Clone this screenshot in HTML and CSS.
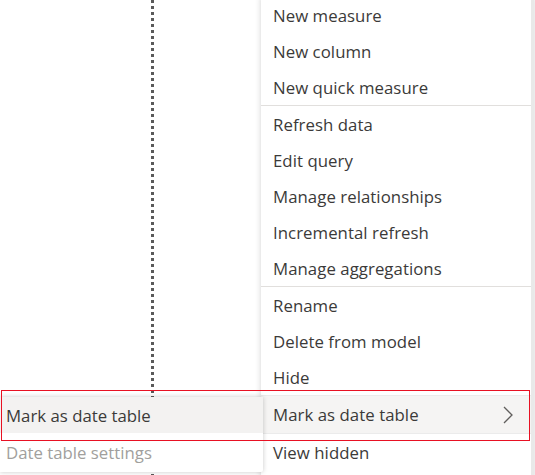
FILE: index.html
```html
<!DOCTYPE html>
<html>
<head>
<meta charset="utf-8">
<link rel="stylesheet" href="styles.css">
</head>
<body>
<div class="stage">
  <div class="pane-left"></div>
  <div class="divider"></div>
  <div class="pane-right">
    <div class="bg-lines">
      <div class="bg-line">Data</div>
      <div class="bg-line">Year</div>
      <div class="bg-line">Year</div>
    </div>
  </div>

  <div class="menu">
    <div class="item">New measure</div>
    <div class="item">New column</div>
    <div class="item">New quick measure</div>
    <div class="sep"></div>
    <div class="item">Refresh data</div>
    <div class="item">Edit query</div>
    <div class="item">Manage relationships</div>
    <div class="item">Incremental refresh</div>
    <div class="item">Manage aggregations</div>
    <div class="sep"></div>
    <div class="item">Rename</div>
    <div class="item">Delete from model</div>
    <div class="item">Hide</div>
    <div class="item active"><span>Mark as date table</span>
      <svg class="chev" width="10" height="18" viewBox="0 0 10 18"><polyline points="1,1 9,9 1,17" fill="none" stroke="#605e5c" stroke-width="1.3"/></svg>
    </div>
    <div class="item">View hidden</div>
  </div>

  <div class="submenu">
    <div class="sub-item hover">Mark as date table</div>
    <div class="sub-item disabled">Date table settings</div>
  </div>

  <div class="highlight-box"></div>
</div>
</body>
</html>
```

FILE: styles.css
```css
html, body {
  margin: 0;
  padding: 0;
  background: #ffffff;
}
.stage {
  position: relative;
  width: 535px;
  height: 475px;
  overflow: hidden;
  display: flex;
  font-family: "Open Sans", "Noto Sans", sans-serif;
  color: #3b3a39;
}
.pane-left {
  width: 151px;
  flex: none;
}
.divider {
  width: 3px;
  flex: none;
  background: repeating-linear-gradient(to bottom, #5a5a5a 0, #5a5a5a 3px, transparent 3px, transparent 6px);
}
.pane-right {
  flex: 1;
  position: relative;
}
.bg-lines {
  display: flex;
  flex-direction: column;
  padding-top: 134px;
  padding-left: 345px;
  font-size: 15px;
  color: #252423;
}
.bg-line {
  height: 35px;
  line-height: 22px;
}
.menu {
  position: absolute;
  left: 261px;
  top: -3px;
  width: 270px;
  background: #ffffff;
  box-shadow: 0 0 6px rgba(0,0,0,0.18);
  border-right: 3px solid #e9e9e9;
  display: flex;
  flex-direction: column;
  padding-bottom: 10px;
}
.item {
  height: 36px;
  display: flex;
  align-items: center;
  padding-left: 12px;
  padding-right: 18px;
  font-size: 16.8px;
  letter-spacing: 0.05px;
  white-space: nowrap;
}
.item.active {
  justify-content: space-between;
  background: #f5f4f3;
  border-top: 1px solid #ebebeb;
  border-bottom: 1px solid #ebebeb;
  height: 37px;
}
.sep {
  height: 1px;
  background: #e1dfdd;
}
.submenu {
  position: absolute;
  left: 0;
  top: 397px;
  width: 263px;
  height: 75px;
  background: #ffffff;
  box-shadow: 0 0 5px rgba(0,0,0,0.22);
  border-radius: 0 2px 2px 0;
  display: flex;
  flex-direction: column;
}
.sub-item {
  height: 36px;
  display: flex;
  align-items: center;
  padding-left: 6px;
  font-size: 16.8px;
  white-space: nowrap;
}
.sub-item.hover {
  background: #f3f2f1;
}
.sub-item.disabled {
  color: #a19f9d;
  height: 39px;
}
.highlight-box {
  position: absolute;
  left: 1px;
  top: 390px;
  width: 527px;
  height: 49px;
  border: 1px solid #e81123;
}
```
